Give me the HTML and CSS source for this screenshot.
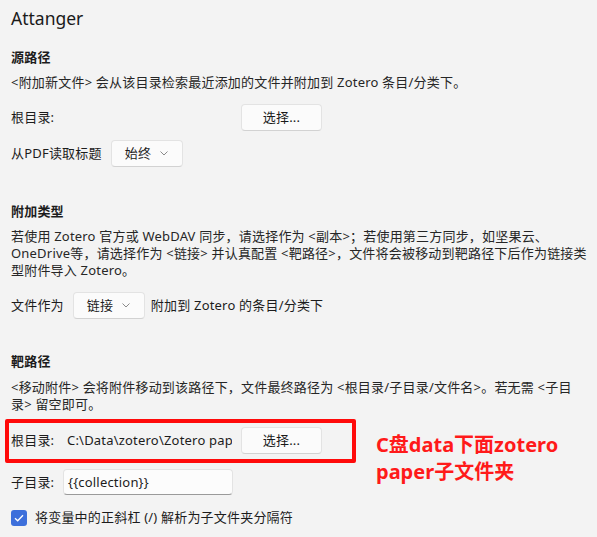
FILE: index.html
```html
<!DOCTYPE html>
<html lang="zh-CN">
<head>
<meta charset="utf-8">
<title>Attanger</title>
<link rel="stylesheet" href="styles.css">
</head>
<body>
<h1 class="title">Attanger</h1>

<section class="sec sec-first">
  <h2 class="sec-head">源路径</h2>
  <p class="desc">&lt;附加新文件&gt; 会从该目录检索最近添加的文件并附加到 Zotero 条目/分类下。</p>
  <div class="row row-first">
    <span class="lbl lbl-path">根目录:</span>
    <span class="path"></span>
    <button class="btn">选择...</button>
  </div>
  <div class="row row-next">
    <span class="lbl lbl-gap">从PDF读取标题</span>
    <div class="drop"><span>始终</span><svg class="chev" width="8" height="5" viewBox="0 0 8 5"><path d="M0.5 0.5 L4 4 L7.5 0.5" fill="none" stroke="#8a8a8a" stroke-width="1"/></svg></div>
  </div>
</section>

<section class="sec sec-second">
  <h2 class="sec-head">附加类型</h2>
  <p class="desc">若使用 Zotero 官方或 WebDAV 同步，请选择作为 &lt;副本&gt;；若使用第三方同步，如坚果云、OneDrive等，请选择作为 &lt;链接&gt; 并认真配置 &lt;靶路径&gt;，文件将会被移动到靶路径下后作为链接类型附件导入 Zotero。</p>
  <div class="row row-first">
    <span class="lbl lbl-gap">文件作为</span>
    <div class="drop"><span>链接</span><svg class="chev" width="8" height="5" viewBox="0 0 8 5"><path d="M0.5 0.5 L4 4 L7.5 0.5" fill="none" stroke="#8a8a8a" stroke-width="1"/></svg></div>
    <span class="after">附加到 Zotero 的条目/分类下</span>
  </div>
</section>

<section class="sec sec-third">
  <h2 class="sec-head">靶路径</h2>
  <p class="desc desc-third">&lt;移动附件&gt; 会将附件移动到该路径下，文件最终路径为 &lt;根目录/子目录/文件名&gt;。若无需 &lt;子目<span class="nobr">录&gt;</span> 留空即可。</p>
  <div class="annot">
    <div class="row">
      <span class="lbl lbl-path">根目录:</span>
      <span class="path">C:\Data\zotero\Zotero paper</span>
      <button class="btn">选择...</button>
    </div>
    <div class="note">C盘data下面zotero<br>paper子文件夹</div>
  </div>
  <div class="row row-input">
    <span class="lbl lbl-sub">子目录:</span>
    <div class="field">{{collection}}</div>
  </div>
  <label class="check-row">
    <span class="check"><svg width="10" height="8" viewBox="0 0 10 8"><path d="M1 4.2 L3.7 6.8 L9 1.2" fill="none" stroke="#fff" stroke-width="1.3"/></svg></span>
    <span>将变量中的正斜杠 (/) 解析为子文件夹分隔符</span>
  </label>
</section>
</body>
</html>
```

FILE: styles.css
```css
html, body {
  margin: 0;
  background: #f3f3f3;
}
body {
  padding: 5px 7px 0 11px;
  font-family: "Noto Sans", "Noto Sans CJK SC", sans-serif;
  font-size: 13px;
  line-height: 17px;
  letter-spacing: 0.2px;
  color: #1c1c1c;
}
.title {
  margin: 0;
  font-size: 17.5px;
  line-height: 26px;
  font-weight: 400;
  letter-spacing: 0;
  color: #1a1a1a;
}
.sec { margin: 0; }
.sec-first { margin-top: 18px; }
.sec-second { margin-top: 36px; }
.sec-third { margin-top: 34px; }
.sec-head {
  margin: 0;
  font-size: 13px;
  line-height: 17px;
  font-weight: 700;
}
.desc {
  margin: 8px 0 0;
  color: #262626;
}
.desc-third { margin-top: 9px; }
.nobr { white-space: nowrap; }
.row {
  display: flex;
  align-items: center;
  height: 27px;
}
.row-first { margin-top: 13px; }
.row-next { margin-top: 9px; }
.lbl { white-space: nowrap; }
.lbl-path { width: 56px; flex: none; }
.lbl-gap { margin-right: 9px; }
.lbl-sub { width: 52px; flex: none; }
.path {
  width: 165px;
  flex: none;
  overflow: hidden;
  white-space: nowrap;
  text-overflow: clip;
}
.btn {
  margin-left: 9px;
  width: 81px;
  height: 27px;
  box-sizing: border-box;
  border: 1px solid #e3e3e3;
  border-bottom-color: #d2d2d2;
  border-radius: 4px;
  background: #fbfbfb;
  font: inherit;
  letter-spacing: inherit;
  color: #1a1a1a;
  padding: 0;
}
.drop {
  display: flex;
  align-items: center;
  height: 27px;
  box-sizing: border-box;
  width: 72px;
  padding: 0 0 0 13px;
  border: 1px solid #e3e3e3;
  border-bottom-color: #d2d2d2;
  border-radius: 4px;
  background: #fbfbfb;
}
.chev { margin-left: 9px; }
.after { margin-left: 6px; }
.annot {
  position: relative;
  margin: 6px 0 0 -6px;
  width: fit-content;
  padding: 4px 30px 5px 2px;
  border: 4px solid #ff0a0a;
  border-radius: 2px;
}
.note {
  position: absolute;
  left: 367px;
  top: 8px;
  width: 220px;
  font-family: "Noto Sans", "Noto Sans CJK SC", sans-serif;
  font-weight: 700;
  font-size: 20px;
  line-height: 27px;
  letter-spacing: 0;
  color: #ff1a1a;
  white-space: nowrap;
}
.row-input { margin-top: 6px; height: 26px; }
.field {
  width: 170px;
  height: 26px;
  box-sizing: border-box;
  border: 1px solid #e3e3e3;
  border-bottom-color: #9a9a9a;
  border-radius: 4px;
  background: #fcfcfc;
  padding: 0 4px;
  line-height: 24px;
}
.check-row {
  display: flex;
  align-items: center;
  margin-top: 14px;
  height: 17px;
}
.check {
  width: 16px;
  height: 16px;
  border-radius: 3px;
  background: #3d6fdb;
  display: flex;
  align-items: center;
  justify-content: center;
  margin-right: 8px;
}
```
